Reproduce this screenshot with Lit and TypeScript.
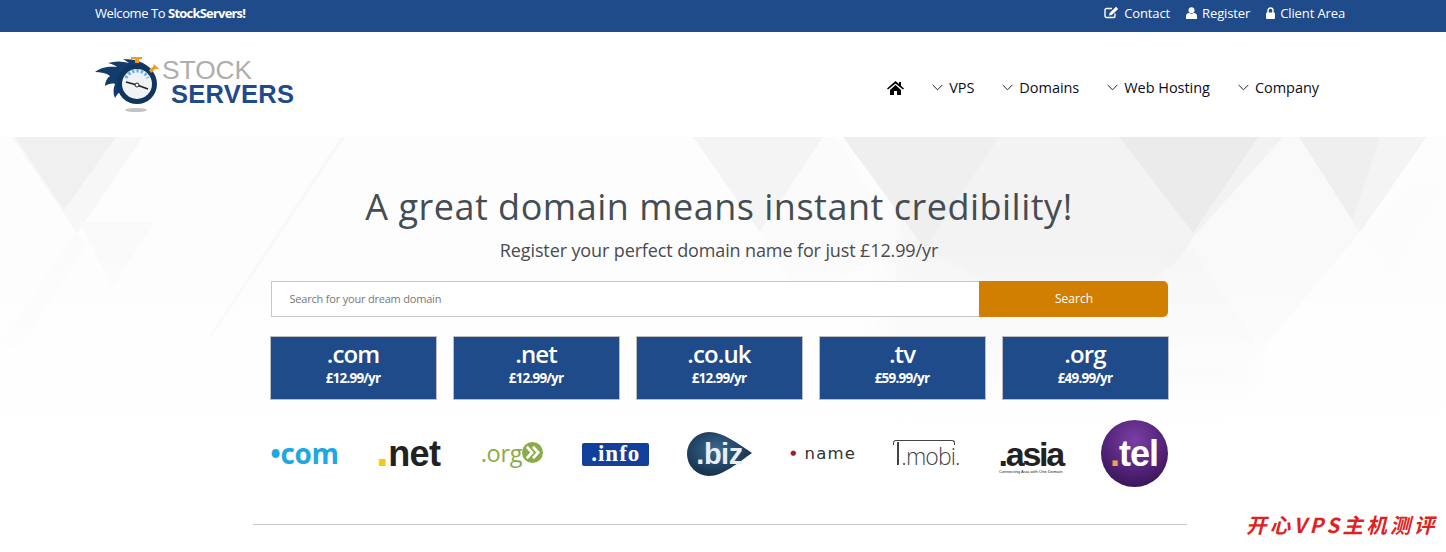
import { LitElement, html, css, svg } from "lit";
import { customElement } from "lit/decorators.js";

const tiles = [
  [".com", "£12.99/yr"],
  [".net", "£12.99/yr"],
  [".co.uk", "£12.99/yr"],
  [".tv", "£59.99/yr"],
  [".org", "£49.99/yr"],
];

const bgShapes = svg`
  <defs>
    <linearGradient id="fade" x1="0" y1="0" x2="0" y2="1">
      <stop offset="0" stop-color="#fff" stop-opacity="0"/>
      <stop offset="0.7" stop-color="#fff" stop-opacity="1"/>
    </linearGradient>
    <filter id="soft"><feGaussianBlur stdDeviation="14"/></filter>
  </defs>
  <rect width="1446" height="415" fill="#fdfdfd"/>
  <polygon points="900,60 1200,60 1260,260 880,260" fill="#f6f6f6" filter="url(#soft)"/>
  <polygon points="693,0 823,0 760,95" fill="#f4f4f4"/>
  <polygon points="760,95 823,0 836,0 905,110 800,160" fill="#fbfbfb"/>
  <polygon points="843,0 1000,0 925,112" fill="#efefef"/>
  <polygon points="1000,0 1119,0 1193,96 1150,150 1000,150 925,112" fill="#f3f3f3"/>
  <polygon points="1119,0 1259,0 1193,96" fill="#ebebeb"/>
  <polygon points="1259,0 1283,0 1180,145 1160,120 1193,96" fill="#f2f2f2"/>
  <polygon points="1283,0 1299,0 1360,95 1252,225 1120,225 1193,100" fill="#f9f9f9"/>
  <polygon points="1299,0 1426,0 1360,95" fill="#efefef"/>
  <polygon points="1380,0 1426,0 1360,95 1352,84" fill="#f4f4f4"/>
  <polygon points="1360,95 1412,47 1446,47 1392,140" fill="#fcfcfc"/>
  <polygon points="1190,110 1255,205 1090,215" fill="#f7f7f7"/>
  <polygon points="12,0 143,0 77,96" fill="#f7f7f7"/>
  <polygon points="15,0 116,0 64,73" fill="#f0f0f0"/>
  <polygon points="80,85 155,85 112,150" fill="#fafafa"/>
  <polygon points="0,210 72,100 77,96 85,110 20,210" fill="#fbfbfb"/>
  <polygon points="341,0 345,0 212,200 208,200" fill="#f8f8f8"/>
  <rect x="0" y="110" width="1446" height="305" fill="url(#fade)"/>
`;

const flame = svg`
  <svg class="clock" width="66" height="58" viewBox="0 0 66 58" aria-hidden="true">
    <ellipse cx="41" cy="54" rx="11" ry="2" fill="#c4c4c4"/>
    <path d="M57 14 C50 6 40 3 28 3 C31 5 33 6 34 7 C27 5 20 5 13 7 C17 8 20 9 22 11 C14 10 6 11 0 16 C6 16 11 17 15 20 C12 22 10 26 10 30 C13 28 17 27 20 28 C18 33 18 38 20 42 C22 38 24 36 26 36 Z" fill="#123b6e"/>
    <circle cx="42" cy="28" r="20" fill="#10355f"/>
    <circle cx="42" cy="28" r="15" fill="#f0f3f6"/>
    <path d="M31 22 A12 12 0 0 1 53 22" fill="none" stroke="#6bb0de" stroke-width="3.4" stroke-dasharray="2.4 2"/>
    <path d="M31 26 L42 29 L53 33" fill="none" stroke="#222" stroke-width="1.7"/>
    <circle cx="42" cy="29" r="2" fill="#fff" stroke="#222"/>
    <path d="M36 1 H47 V3 H44 V7 H40 V3 H36 Z" fill="#f39a1c"/>
    <path d="M54 14 L59 10 L58 8 L60 9 L64 13 L60 13 L56 17 Z" fill="#f39a1c"/>
  </svg>
`;

@customElement("app-root")
export class AppRoot extends LitElement {
  static styles = css`
    :host { display: block; width: 100%; font-family: "Open Sans", "Noto Sans", Arial, sans-serif; overflow: hidden; height: 552px; background: #fff; }
    .top { height: 32px; background: #1f4b8a; color: #fff; display: flex; justify-content: space-between; align-items: center; padding: 0 101px 7px 95px; box-sizing: border-box; font-size: 13px; letter-spacing: -0.12px; }
    .welcome { letter-spacing: -0.42px; }
    .top b { font-weight: 700; letter-spacing: -0.8px; }
    .top-links { display: flex; gap: 16px; }
    .top-links span { display: flex; align-items: center; gap: 5px; }
    .header { height: 105px; display: flex; justify-content: space-between; align-items: center; padding: 0 127px 0 95px; box-sizing: border-box; }
    .logo { display: flex; width: 200px; height: 58px; font-family: "Liberation Sans", Arial, sans-serif; }
    .clock { flex: none; }
    .logo-text { display: flex; flex-direction: column; margin-left: 1px; }
    .stock { font-size: 26.3px; line-height: 24px; color: #aeaeae; margin-top: 2px; letter-spacing: 0; }
    .servers { font-size: 25.5px; line-height: 24px; font-weight: 700; color: #1f4b8a; margin-left: 9px; letter-spacing: 0.25px; }
    nav { display: flex; align-items: center; font-size: 14.5px; color: #0c0c22; letter-spacing: -0.04px; padding-top: 6px; }
    nav .home { margin-right: 28px; display: block; }
    nav .item { display: flex; align-items: center; gap: 6px; margin-right: 28px; }
    nav .item:last-child { margin-right: 0; }
    .hero { position: relative; height: 415px; }
    .bg { position: absolute; inset: 0; display: block; }
    .content { position: relative; display: flex; flex-direction: column; align-items: center; padding-right: 8px; }
    h1 { margin: 45px 0 0; font-weight: 400; font-size: 36px; line-height: 50px; color: #454d53; letter-spacing: 0.5px; white-space: nowrap; }
    .sub { font-size: 18px; line-height: 26px; margin-top: 5px; color: #4a4a4f; letter-spacing: -0.12px; }
    .search { display: flex; width: 897px; height: 36px; margin-top: 18px; }
    .input { flex: 1; box-sizing: border-box; border: 1px solid #c8c8c8; border-right: 0; background: #fff; font-size: 11px; color: #777; display: flex; align-items: center; padding: 0 0 2px 18px; letter-spacing: -0.2px; }
    .btn { width: 189px; background: #d17f00; color: #fff; font-size: 12px; font-weight: 400; display: flex; align-items: center; justify-content: center; border-radius: 0 5px 5px 0; padding: 0 0 2px 2px; box-sizing: border-box; }
    .tiles { display: flex; gap: 16px; margin-top: 19px; width: 899px; }
    .tile { flex: 1; height: 64px; box-sizing: border-box; border: 1px solid #bdbdbd; background: #1f4b8a; color: #fff; display: flex; flex-direction: column; align-items: center; text-align: center; font-weight: 600; }
    .tile .d { font-size: 24px; line-height: 28px; margin-top: 3px; letter-spacing: -0.9px; }
    .tile .p { font-size: 13.5px; line-height: 18px; margin-top: 1px; letter-spacing: -0.8px; font-weight: 700; }
    .logos { display: flex; justify-content: space-between; width: 897px; height: 72px; margin-top: 18px; }
    .lg { flex: none; width: 68px; display: flex; justify-content: center; align-items: center; white-space: nowrap; position: relative; font-family: "Liberation Sans", Arial, sans-serif; }
    .com { color: #1ea7e0; font-size: 28px; font-weight: 700; font-family: "Open Sans", sans-serif; letter-spacing: -0.3px; padding-bottom: 3px; box-sizing: border-box; }
    .com i, .name i, .net i { font-style: normal; }
    .net { color: #222; font-size: 36px; font-weight: 700; letter-spacing: -0.6px; align-items: baseline; line-height: 72px; }
    .net i { color: #f4c814; font-size: 46px; line-height: 0; }
    .org { color: #8bab4a; font-size: 23.5px; font-family: "Open Sans", sans-serif; gap: 0; letter-spacing: -0.3px; padding-bottom: 3px; box-sizing: border-box; }
    .org svg { flex: none; margin-bottom: 1px; }
    .info-box { background: #123f9a; color: #fff; font-family: "Liberation Serif", serif; font-size: 23px; line-height: 22px; height: 23px; width: 67px; flex: none; text-align: center; border-radius: 2px; letter-spacing: 1px; font-weight: 700; }
    .biz svg { display: block; flex: none; }
    .biz-t { position: absolute; left: 0; top: 18px; width: 68px; text-align: center; line-height: 36px; color: #e8eef3; font-size: 29px; font-weight: 700; letter-spacing: -0.5px; }
    .name { font-size: 16.5px; color: #333; letter-spacing: 1.2px; font-family: "DejaVu Sans", sans-serif; gap: 7px; padding-bottom: 2px; box-sizing: border-box; }
    .name i { color: #a11a3a; font-size: 7px; }
    .mobi { font-size: 23px; color: #444; font-family: "Open Sans", sans-serif; font-weight: 300; letter-spacing: -0.9px; padding: 4px 0 0 7px; box-sizing: border-box; }
    .mobi::before { content: ""; position: absolute; left: 0; top: 22px; width: 62px; height: 5px; border: 1.5px solid #444; border-bottom: 0; border-radius: 3px 3px 0 0; box-sizing: border-box; }
    .mobi::after { content: ""; position: absolute; left: 4px; top: 24px; width: 2px; height: 23px; background: #444; }
    .asia { flex-direction: column; color: #222; font-weight: 700; font-size: 34px; line-height: 30px; letter-spacing: -2.2px; padding-top: 5px; box-sizing: border-box; }
    .asia small { font-size: 4.2px; line-height: 5px; letter-spacing: 0; font-weight: 400; }
    .tel { width: 67px; height: 67px; border-radius: 50%; background: radial-gradient(circle at 50% 30%, #7a3fa6, #4c1f70 60%, #2d0f45 100%); color: #fff; font-size: 36px; font-weight: 700; letter-spacing: -1px; margin-top: 2px; }
    .tel-dot { color: #f0a050; }
    hr { position: absolute; left: 253px; top: 387px; width: 934px; height: 1px; margin: 0; border: 0; background: #c8c8c8; }
    .mark { position: absolute; left: 1246px; top: 373px; font-family: "Noto Sans CJK SC", sans-serif; font-style: italic; font-weight: 700; font-size: 20.5px; line-height: 28px; color: #de2222; white-space: nowrap; letter-spacing: 3.3px; }
  `;

  render() {
    return html`
      <div class="top">
        <div class="welcome">Welcome To <b>StockServers!</b></div>
        <div class="top-links">
          <span><svg width="15" height="13" viewBox="0 0 15 13"><path d="M2.5 2.5 H8 M11 7.5 V10 a1.5 1.5 0 0 1 -1.5 1.5 H2.5 A1.5 1.5 0 0 1 1 10 V4 a1.5 1.5 0 0 1 1.5 -1.5" fill="none" stroke="#fff" stroke-width="1.4"/><path d="M5 9.5 L5.6 7 L12 .8 L14.2 3 L7.8 9 Z" fill="#fff"/></svg>Contact</span>
          <span><svg width="11" height="12" viewBox="0 0 11 12"><circle cx="5.5" cy="3.2" r="3" fill="#fff"/><path d="M0 12 V9 C0 7 1.5 6 3 6 C4.4 7 6.6 7 8 6 C9.5 6 11 7 11 9 V12 Z" fill="#fff"/></svg>Register</span>
          <span><svg width="9" height="12" viewBox="0 0 9 12"><path d="M2 6 V3.5 a2.5 2.5 0 0 1 5 0 V6" fill="none" stroke="#fff" stroke-width="1.5"/><rect x="0" y="5.5" width="9" height="6.5" rx="1" fill="#fff"/></svg>Client Area</span>
        </div>
      </div>
      <div class="header">
        <div class="logo">
          ${flame}
          <div class="logo-text"><span class="stock">STOCK</span><span class="servers">SERVERS</span></div>
        </div>
        <nav>
          <svg class="home" width="17" height="14" viewBox="0 0 17 14"><path d="M8.5 0 L12 3 V1 H14 V4.7 L17 7.5 L16 8.5 L8.5 2.4 L1 8.5 L0 7.5 Z M3 9 L8.5 4 L14 9 V14 H10 V10 H7 V14 H3 Z" fill="#000"/></svg>
          ${["VPS", "Domains", "Web Hosting", "Company"].map(
            (t) => html`<div class="item"><svg width="11" height="7" viewBox="0 0 11 7"><path d="M.7 1 L5.5 5.8 L10.3 1" fill="none" stroke="#222" stroke-width="1"/></svg>${t}</div>`
          )}
        </nav>
      </div>
      <div class="hero">
        <svg class="bg" width="1446" height="415" viewBox="0 0 1446 415" aria-hidden="true">${bgShapes}</svg>
        <div class="content">
          <h1>A great domain means instant credibility!</h1>
          <div class="sub">Register your perfect domain name for just £12.99/yr</div>
          <div class="search"><div class="input">Search for your dream domain</div><div class="btn">Search</div></div>
          <div class="tiles">
            ${tiles.map(([d, p]) => html`<div class="tile"><div class="d">${d}</div><div class="p">${p}</div></div>`)}
          </div>
          <div class="logos">
            <div class="lg com"><i>•</i>com</div>
            <div class="lg net"><i>.</i>net</div>
            <div class="lg org">.org<svg width="21" height="21" viewBox="0 0 22 22"><circle cx="11" cy="11" r="11" fill="#8bab4a"/><path d="M5 5 L10.5 11 L5 17 M11.5 5 L17 11 L11.5 17" fill="none" stroke="#fff" stroke-width="2.8"/></svg></div>
            <div class="lg"><div class="info-box">.info</div></div>
            <div class="lg biz">
              <svg width="65" height="44" viewBox="0 0 65 44" aria-hidden="true">
                <defs><radialGradient id="bz" cx="0.45" cy="0.4" r="0.7"><stop offset="0" stop-color="#3a6a92"/><stop offset="0.7" stop-color="#1c3a58"/><stop offset="1" stop-color="#14293f"/></radialGradient></defs>
                <path d="M22 0 C36 0 52 12 65 21 C52 30 36 44 22 44 A22 22 0 0 1 22 0 Z" fill="url(#bz)"/>
              </svg>
              <div class="biz-t">.biz</div>
            </div>
            <div class="lg name"><i>●</i>name</div>
            <div class="lg mobi">.mobi.</div>
            <div class="lg asia">.asia<small>Connecting Asia with One Domain</small></div>
            <div class="lg tel"><span class="tel-dot">.</span>tel</div>
          </div>
        </div>
        <hr />
        <div class="mark">开心VPS主机测评</div>
      </div>
    `;
  }
}
